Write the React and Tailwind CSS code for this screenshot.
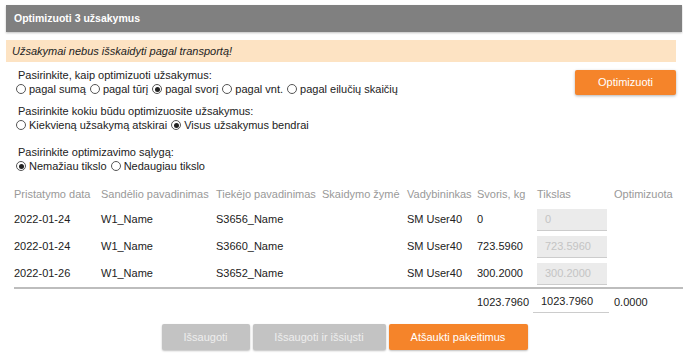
import React from 'react';

const font = { fontFamily: '"Liberation Sans", Arial, sans-serif' };

function Radio({ checked, label }) {
  return (
    <span className="inline-flex items-center mr-[4px]">
      <span className="w-[10px] h-[10px] rounded-full border border-[#555] flex items-center justify-center mr-[3px] bg-white">
        {checked && <span className="w-[5px] h-[5px] rounded-full bg-[#222]" />}
      </span>
      <span>{label}</span>
    </span>
  );
}

const rows = [
  ['2022-01-24', 'W1_Name', 'S3656_Name', 'SM User40', '0', '0'],
  ['2022-01-24', 'W1_Name', 'S3660_Name', 'SM User40', '723.5960', '723.5960'],
  ['2022-01-26', 'W1_Name', 'S3652_Name', 'SM User40', '300.2000', '300.2000'],
];

const cols = 'grid grid-cols-[87px_115px_106px_85px_70px_60px_77px_1fr] whitespace-nowrap';

export default function App() {
  return (
    <div className="w-[683px] h-[362px] bg-white pt-[5px] pl-[6px] text-[11px] text-[#222] overflow-hidden" style={font}>
      <div className="h-[27px] bg-[#808080] text-white font-bold flex items-center pl-[8px] text-[10.5px] shadow-[0_1px_2px_rgba(0,0,0,0.25)] mr-[1px]">
        Optimizuoti 3 užsakymus
      </div>

      <div className="mt-[8px] mr-[7px] h-[22px] bg-[#fde3c3] italic flex items-center pl-[6px]">
        Užsakymai nebus išskaidyti pagal transportą!
      </div>

      <div className="flex justify-between pr-[7px]">
        <div className="pl-[12px] whitespace-nowrap">
          <div className="mt-[6px] leading-[14px]">Pasirinkite, kaip optimizuoti užsakymus:</div>
          <div className="flex items-center leading-[14px] -ml-[2px]">
            <Radio label="pagal sumą" />
            <Radio label="pagal tūrį" />
            <Radio checked label="pagal svorį" />
            <Radio label="pagal vnt." />
            <Radio label="pagal eilučių skaičių" />
          </div>
          <div className="mt-[8px] leading-[14px]">Pasirinkite kokiu būdu optimizuosite užsakymus:</div>
          <div className="flex items-center leading-[14px] -ml-[2px]">
            <Radio label="Kiekvieną užsakymą atskirai" />
            <Radio checked label="Visus užsakymus bendrai" />
          </div>
          <div className="mt-[13px] leading-[14px]">Pasirinkite optimizavimo sąlygą:</div>
          <div className="flex items-center leading-[14px] -ml-[2px]">
            <Radio checked label="Nemažiau tikslo" />
            <Radio label="Nedaugiau tikslo" />
          </div>
        </div>
        <button className="mt-[8px] w-[101px] h-[25px] bg-[#f5842a] text-white text-[11px] rounded-[2px] shadow-[0_1px_3px_rgba(0,0,0,0.3)]">
          Optimizuoti
        </button>
      </div>

      <div className="pl-[8px] mt-[12px]">
        <div className={`${cols} text-[#999] h-[18px] items-center`}>
          <div>Pristatymo data</div>
          <div>Sandėlio pavadinimas</div>
          <div>Tiekėjo pavadinimas</div>
          <div>Skaidymo žymė</div>
          <div>Vadybininkas</div>
          <div>Svoris, kg</div>
          <div>Tikslas</div>
          <div>Optimizuota</div>
        </div>
        {rows.map((r, i) => (
          <div key={i} className={`${cols} h-[27px] items-center ${i === 0 ? 'mt-[3px]' : ''}`}>
            <div>{r[0]}</div>
            <div>{r[1]}</div>
            <div>{r[2]}</div>
            <div></div>
            <div>{r[3]}</div>
            <div>{r[4]}</div>
            <div>
              <div className="w-[70px] h-[22px] bg-[#ebebeb] border-b border-[#ccc] text-[#c4c4c4] flex items-center pl-[8px]">
                {r[5]}
              </div>
            </div>
            <div></div>
          </div>
        ))}
        <div className="h-[2px] bg-[#bdbdbd]" />
        <div className={`${cols} h-[26px] items-center`}>
          <div></div><div></div><div></div><div></div><div></div>
          <div>1023.7960</div>
          <div className="-ml-[4px]">
            <div className="w-[76px] h-[22px] border-b border-[#ccc] flex items-center pl-[8px]">1023.7960</div>
          </div>
          <div>0.0000</div>
        </div>
      </div>

      <div className="flex justify-center gap-[3px] mt-[9px]">
        <button className="w-[88px] h-[26px] bg-[#c3c3c3] text-[#eee] text-[11px] rounded-[2px] shadow-[0_1px_2px_rgba(0,0,0,0.25)]">Išsaugoti</button>
        <button className="w-[133px] h-[26px] bg-[#c3c3c3] text-[#eee] text-[11px] rounded-[2px] shadow-[0_1px_2px_rgba(0,0,0,0.25)]">Išsaugoti ir išsiųsti</button>
        <button className="w-[139px] h-[26px] bg-[#f5842a] text-white text-[11px] rounded-[2px] shadow-[0_1px_2px_rgba(0,0,0,0.25)]">Atšaukti pakeitimus</button>
      </div>
    </div>
  );
}
